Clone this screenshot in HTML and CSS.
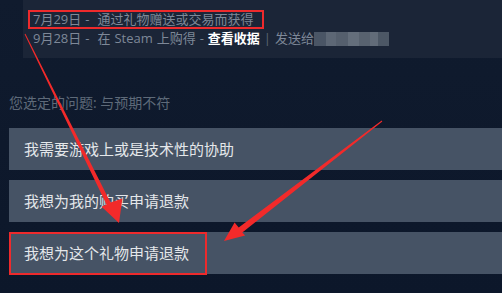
FILE: index.html
```html
<!DOCTYPE html>
<html lang="zh-CN">
<head>
<meta charset="utf-8">
<title>Steam 退款</title>
<link rel="stylesheet" href="styles.css">
</head>
<body>
<div class="page">
  <div class="purchase-panel">
    <div class="line line-first"><span class="mark-box">7月29日 -  通过礼物赠送或交易而获得</span></div>
    <div class="line">9月28日 -  在 Steam 上购得 - <b class="receipt">查看收据</b> <span class="sep">|</span> 发送给<span class="blurred"></span></div>
  </div>
  <div class="issue-label">您选定的问题: 与预期不符</div>
  <div class="options">
    <div class="option">我需要游戏上或是技术性的协助</div>
    <div class="option">我想为我的购买申请退款</div>
    <div class="option option-marked"><span class="mark-btn">我想为这个礼物申请退款</span></div>
  </div>
  <svg class="arrows" width="502" height="293" viewBox="0 0 502 293">
    <polygon fill="#f22a2a" points="25.4,33.8 24.6,34.2 106.5,204.6 101.6,206.7 119,223 122.4,198.5 110.5,202.6"/>
    <polygon fill="#f22a2a" points="382.3,121.4 381.7,120.6 238.7,227.6 234.6,222.4 224,241 245.1,235.5 242.3,232.4"/>
  </svg>
</div>
</body>
</html>
```
FILE: styles.css
```css
html, body {
  margin: 0;
  padding: 0;
}
body {
  background: #0e192c;
  font-family: "Open Sans", "Noto Sans CJK SC", sans-serif;
  overflow: hidden;
}
.page {
  position: relative;
  width: 502px;
  height: 293px;
  background: linear-gradient(180deg, #101b2e 0%, #0c172a 100%);
}
.purchase-panel {
  margin-left: 23px;
  height: 58px;
  box-sizing: border-box;
  padding: 10px 0 0 5px;
  background: #1b2537;
  color: #7e8898;
  font-size: 13px;
}
.line {
  white-space: pre;
  word-spacing: 0.6px;
  line-height: 17px;
  height: 17px;
}
.line-first {
  height: 20px;
  line-height: 15px;
}
.line:not(.line-first) {
  padding-left: 5px;
}
.mark-box {
  display: inline-block;
  border: 2px solid #ee2a2c;
  padding: 0 9px 0 3px;
  line-height: 15px;
}
.receipt {
  color: #ffffff;
  font-weight: bold;
}
.sep {
  color: #5c6675;
}
.blurred {
  display: inline-block;
  vertical-align: -3px;
  width: 75px;
  height: 14px;
  background: linear-gradient(90deg, #4a5565 0 12px, #5d6775 12px 22px, #555f6d 22px 34px, #646e7b 34px 45px, #58626f 45px 56px, #626c79 56px 64px, #4c5765 64px 75px);
}
.issue-label {
  margin: 36px 0 0 9px;
  height: 18px;
  line-height: 18px;
  font-size: 14px;
  color: #5e6a79;
}
.options {
  margin: 16px 0 0 9px;
  display: flex;
  flex-direction: column;
  gap: 10px;
}
.option {
  height: 42px;
  line-height: 42px;
  padding-left: 15px;
  background: #465365;
  color: #e4e7ea;
  font-size: 15px;
}
.option-marked {
  padding-left: 0;
}
.mark-btn {
  display: inline-block;
  box-sizing: border-box;
  width: 198px;
  height: 43px;
  line-height: 39px;
  padding-left: 13px;
  border: 2px solid #ee2a2c;
  vertical-align: top;
}
.arrows {
  position: absolute;
  left: 0;
  top: 0;
  pointer-events: none;
}
```
